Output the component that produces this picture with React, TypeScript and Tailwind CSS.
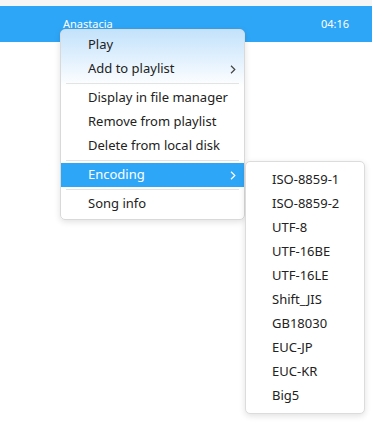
export default function App() {
  const mainItems = [
    { label: "Play" },
    { label: "Add to playlist", sub: true },
    { sep: true },
    { label: "Display in file manager" },
    { label: "Remove from playlist" },
    { label: "Delete from local disk" },
    { sep: true },
    { label: "Encoding", sub: true, active: true },
    { sep: true },
    { label: "Song info" },
  ];

  const encodings = [
    "ISO-8859-1",
    "ISO-8859-2",
    "UTF-8",
    "UTF-16BE",
    "UTF-16LE",
    "Shift_JIS",
    "GB18030",
    "EUC-JP",
    "EUC-KR",
    "Big5",
  ];

  const Chevron = ({ color }: { color: string }) => (
    <svg width="6" height="9" viewBox="0 0 6 9" className="absolute right-[8px] top-[8px]">
      <path d="M1 0.8 L4.8 4.5 L1 8.2" fill="none" stroke={color} strokeWidth="1.2" />
    </svg>
  );

  return (
    <div
      className="relative w-[372px] h-[428px] overflow-hidden bg-white"
      style={{ fontFamily: '"Noto Sans", sans-serif' }}
    >
      <div className="h-[6px] bg-[#f6f6f6]" />
      <div className="h-[36px] bg-[#2ea6f7] flex items-start pt-[11px] text-[11px] text-white">
        <span className="ml-[63px] leading-[14px]">Anastacia</span>
        <span className="ml-auto mr-[23px] leading-[14px]">04:16</span>
      </div>

      {/* main context menu */}
      <div className="absolute left-[60px] top-[29px] w-[185px] rounded-[5px] border border-[#d9d9d9] shadow-[0_2px_6px_rgba(0,0,0,0.12)] bg-gradient-to-b from-[#c3e2fb] via-white via-[30%] to-white pt-[3px] pb-[3px]">
        {mainItems.map((it, i) =>
          it.sep ? (
            <div key={i} className="h-[5px] flex items-center px-[5px]">
              <div className="h-px w-full bg-[#e3e3e3]" />
            </div>
          ) : (
            <div
              key={i}
              className={
                "relative h-[24px] flex items-center pl-[27px] text-[13px] " +
                (it.active ? "bg-[#2ea6f7] text-white" : "text-[#222222]")
              }
            >
              {it.label}
              {it.sub && <Chevron color={it.active ? "#ffffff" : "#444444"} />}
            </div>
          )
        )}
      </div>

      {/* encoding submenu */}
      <div className="absolute left-[245px] top-[161px] w-[120px] rounded-[5px] border border-[#dcdcdc] bg-white shadow-[0_2px_6px_rgba(0,0,0,0.12)] pt-[6px] pb-[5px]">
        {encodings.map((e) => (
          <div key={e} className="h-[24px] flex items-center pl-[26px] text-[13px] text-[#222222]">
            {e}
          </div>
        ))}
      </div>
    </div>
  );
}
